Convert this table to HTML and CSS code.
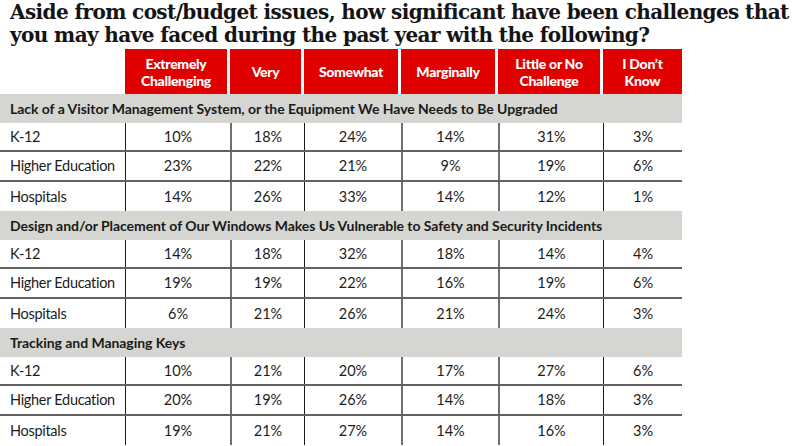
FILE: index.html
```html
<!DOCTYPE html>
<html>
<head>
<meta charset="utf-8">
<link rel="stylesheet" href="styles.css">
</head>
<body>
<h1 class="title">Aside from cost/budget issues, how significant have been challenges that<br>you may have faced during the past year with the following?</h1>
<div class="tbl">
  <div class="row head">
    <div class="hc blank"></div>
    <div class="hc">Extremely<br>Challenging</div>
    <div class="hc">Very</div>
    <div class="hc">Somewhat</div>
    <div class="hc">Marginally</div>
    <div class="hc">Little or No<br>Challenge</div>
    <div class="hc last">I Don’t<br>Know</div>
  </div>

  <div class="sect">Lack of a Visitor Management System, or the Equipment We Have Needs to Be Upgraded</div>
  <div class="row data"><div class="lbl">K-12</div><div class="c">10%</div><div class="c g">18%</div><div class="c">24%</div><div class="c g">14%</div><div class="c g">31%</div><div class="c">3%</div></div>
  <div class="row data"><div class="lbl">Higher Education</div><div class="c">23%</div><div class="c g">22%</div><div class="c">21%</div><div class="c g">9%</div><div class="c g">19%</div><div class="c">6%</div></div>
  <div class="row data end"><div class="lbl">Hospitals</div><div class="c">14%</div><div class="c g">26%</div><div class="c">33%</div><div class="c g">14%</div><div class="c g">12%</div><div class="c">1%</div></div>

  <div class="sect">Design and/or Placement of Our Windows Makes Us Vulnerable to Safety and Security Incidents</div>
  <div class="row data"><div class="lbl">K-12</div><div class="c">14%</div><div class="c g">18%</div><div class="c">32%</div><div class="c g">18%</div><div class="c g">14%</div><div class="c">4%</div></div>
  <div class="row data"><div class="lbl">Higher Education</div><div class="c">19%</div><div class="c g">19%</div><div class="c">22%</div><div class="c g">16%</div><div class="c g">19%</div><div class="c">6%</div></div>
  <div class="row data end"><div class="lbl">Hospitals</div><div class="c">6%</div><div class="c g">21%</div><div class="c">26%</div><div class="c g">21%</div><div class="c g">24%</div><div class="c">3%</div></div>

  <div class="sect">Tracking and Managing Keys</div>
  <div class="row data"><div class="lbl">K-12</div><div class="c">10%</div><div class="c g">21%</div><div class="c">20%</div><div class="c g">17%</div><div class="c g">27%</div><div class="c">6%</div></div>
  <div class="row data"><div class="lbl">Higher Education</div><div class="c">20%</div><div class="c g">19%</div><div class="c">26%</div><div class="c g">14%</div><div class="c g">18%</div><div class="c">3%</div></div>
  <div class="row data end"><div class="lbl">Hospitals</div><div class="c">19%</div><div class="c g">21%</div><div class="c">27%</div><div class="c g">14%</div><div class="c g">16%</div><div class="c">3%</div></div>
</div>
</body>
</html>
```

FILE: styles.css
```css
html, body {
  margin: 0;
  padding: 0;
  background: #ffffff;
  overflow: hidden;
}
body {
  width: 800px;
  height: 446px;
  font-family: Lato, "Noto Sans", sans-serif;
  color: #1c1c1c;
}
.title {
  margin: 0;
  padding: 0 0 0 10px;
  font-family: "DejaVu Serif", serif;
  font-weight: bold;
  font-size: 20px;
  line-height: 23px;
  letter-spacing: -0.6px;
  color: #141414;
  height: 49px;
  box-sizing: border-box;
  padding-top: 1px;
  white-space: nowrap;
}
.tbl {
  width: 682px;
}
.row {
  display: grid;
  grid-template-columns: 125px 105px 74px 97px 97px 105px 79px;
}
.head {
  height: 45px;
}
.hc {
  background: #e10000;
  color: #ffffff;
  font-weight: 900;
  font-size: 14px;
  line-height: 17px;
  letter-spacing: -0.3px;
  display: flex;
  align-items: center;
  justify-content: center;
  text-align: center;
  margin-right: 3px;
}
.hc.blank {
  background: transparent;
  margin-right: 0;
}
.hc.last {
  margin-right: 0;
}
.sect {
  height: 29px;
  background: #d5d5d1;
  font-weight: bold;
  font-size: 14px;
  line-height: 29px;
  letter-spacing: -0.05px;
  padding-left: 10px;
  white-space: nowrap;
  color: #1a1a1a;
}
.data {
  height: 29.33px;
  box-sizing: border-box;
  border-bottom: 2px solid #626262;
  font-size: 14.5px;
}
.data.end {
  border-bottom: none;
}
.lbl {
  padding-left: 10px;
  display: flex;
  align-items: center;
  letter-spacing: -0.3px;
}
.c {
  border-left: 1px solid #1a1a1a;
  display: flex;
  align-items: center;
  justify-content: center;
}
.c.g {
  border-left: 2px solid #707070;
}
```
